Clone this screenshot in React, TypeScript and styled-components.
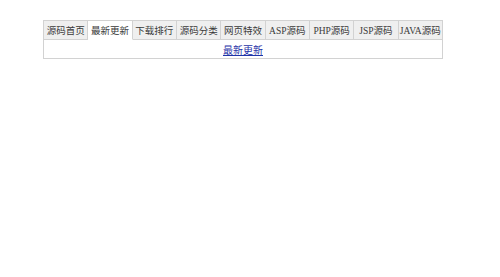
import React from 'react';
import styled, { createGlobalStyle } from 'styled-components';

const GlobalStyle = createGlobalStyle`
  body {
    margin: 0;
    background: #fff;
    font-family: "Liberation Serif", "Noto Sans CJK SC", serif;
  }
`;

const Container = styled.div`
  width: 400px;
  margin: 20px 0 0 43px;
`;

const TabBar = styled.ul`
  display: flex;
  margin: 0;
  padding: 0;
  list-style: none;
`;

const Tab = styled.li<{ $active?: boolean }>`
  flex: 1;
  height: 20px;
  display: flex;
  align-items: center;
  justify-content: center;
  box-sizing: border-box;
  border: 1px solid #d2d2d2;
  border-left: none;
  border-bottom-color: ${(p) => (p.$active ? '#fff' : '#d2d2d2')};
  background: ${(p) => (p.$active ? '#fff' : '#efefef')};
  color: #3a3a3a;
  font-size: 9.5px;
  white-space: nowrap;
  &:first-child {
    border-left: 1px solid #d2d2d2;
  }
`;

const Panel = styled.div`
  height: 19px;
  box-sizing: border-box;
  border: 1px solid #d2d2d2;
  border-top: none;
  display: flex;
  align-items: center;
  justify-content: center;
`;

const Link = styled.a`
  color: #1f33a8;
  font-size: 10px;
  text-decoration: underline;
`;

const tabs = [
  '源码首页',
  '最新更新',
  '下载排行',
  '源码分类',
  '网页特效',
  'ASP源码',
  'PHP源码',
  'JSP源码',
  'JAVA源码',
];

function App() {
  return (
    <>
      <GlobalStyle />
      <Container>
        <TabBar>
          {tabs.map((t, i) => (
            <Tab key={t} $active={i === 1}>
              {t}
            </Tab>
          ))}
        </TabBar>
        <Panel>
          <Link href="#">最新更新</Link>
        </Panel>
      </Container>
    </>
  );
}
export default App;
